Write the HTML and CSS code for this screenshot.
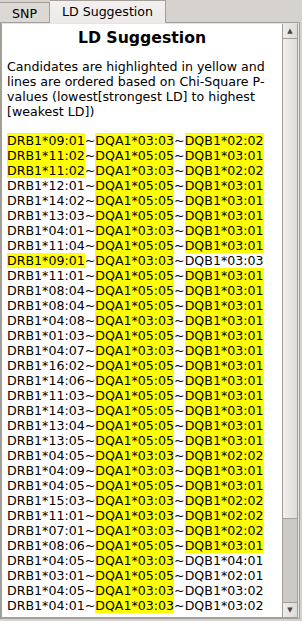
FILE: index.html
```html
<!DOCTYPE html>
<html lang="en">
<head>
  <meta charset="UTF-8" />
  <title>LD Suggestion</title>
  <link rel="stylesheet" href="styles.css">
</head>
<body>
  <div class="tabs">
    <div class="tab">SNP</div>
    <div class="tab active">LD Suggestion</div>
  </div>

  <div class="panel">
    <div class="frame">
      <div class="text">
        <div class="title">LD Suggestion</div>
        <p class="info">Candidates are highlighted in yellow and lines are ordered based on Chi-Square P-values (lowest[strongest LD] to highest [weakest LD])</p>

        <div class="list">
          <div><span class="hl">DRB1*09:01</span>~<span class="hl">DQA1*03:03</span>~<span class="hl">DQB1*02:02</span></div>
          <div><span class="hl">DRB1*11:02</span>~<span class="hl">DQA1*05:05</span>~<span class="hl">DQB1*03:01</span></div>
          <div><span class="hl">DRB1*11:02</span>~<span class="hl">DQA1*03:03</span>~<span class="hl">DQB1*02:02</span></div>
          <div>DRB1*12:01~<span class="hl">DQA1*05:05</span>~<span class="hl">DQB1*03:01</span></div>
          <div>DRB1*14:02~<span class="hl">DQA1*05:05</span>~<span class="hl">DQB1*03:01</span></div>
          <div>DRB1*13:03~<span class="hl">DQA1*05:05</span>~<span class="hl">DQB1*03:01</span></div>
          <div>DRB1*04:01~<span class="hl">DQA1*03:03</span>~<span class="hl">DQB1*03:01</span></div>
          <div>DRB1*11:04~<span class="hl">DQA1*05:05</span>~<span class="hl">DQB1*03:01</span></div>
          <div><span class="hl">DRB1*09:01</span>~<span class="hl">DQA1*03:03</span>~DQB1*03:03</div>
          <div>DRB1*11:01~<span class="hl">DQA1*05:05</span>~<span class="hl">DQB1*03:01</span></div>
          <div>DRB1*08:04~<span class="hl">DQA1*05:05</span>~<span class="hl">DQB1*03:01</span></div>
          <div>DRB1*08:04~<span class="hl">DQA1*05:05</span>~<span class="hl">DQB1*03:01</span></div>
          <div>DRB1*04:08~<span class="hl">DQA1*03:03</span>~<span class="hl">DQB1*03:01</span></div>
          <div>DRB1*01:03~<span class="hl">DQA1*05:05</span>~<span class="hl">DQB1*03:01</span></div>
          <div>DRB1*04:07~<span class="hl">DQA1*03:03</span>~<span class="hl">DQB1*03:01</span></div>
          <div>DRB1*16:02~<span class="hl">DQA1*05:05</span>~<span class="hl">DQB1*03:01</span></div>
          <div>DRB1*14:06~<span class="hl">DQA1*05:05</span>~<span class="hl">DQB1*03:01</span></div>
          <div>DRB1*11:03~<span class="hl">DQA1*05:05</span>~<span class="hl">DQB1*03:01</span></div>
          <div>DRB1*14:03~<span class="hl">DQA1*05:05</span>~<span class="hl">DQB1*03:01</span></div>
          <div>DRB1*13:04~<span class="hl">DQA1*05:05</span>~<span class="hl">DQB1*03:01</span></div>
          <div>DRB1*13:05~<span class="hl">DQA1*05:05</span>~<span class="hl">DQB1*03:01</span></div>
          <div>DRB1*04:05~<span class="hl">DQA1*03:03</span>~<span class="hl">DQB1*02:02</span></div>
          <div>DRB1*04:09~<span class="hl">DQA1*03:03</span>~<span class="hl">DQB1*03:01</span></div>
          <div>DRB1*04:05~<span class="hl">DQA1*05:05</span>~<span class="hl">DQB1*03:01</span></div>
          <div>DRB1*15:03~<span class="hl">DQA1*03:03</span>~<span class="hl">DQB1*02:02</span></div>
          <div>DRB1*11:01~<span class="hl">DQA1*03:03</span>~<span class="hl">DQB1*02:02</span></div>
          <div>DRB1*07:01~<span class="hl">DQA1*03:03</span>~<span class="hl">DQB1*02:02</span></div>
          <div>DRB1*08:06~<span class="hl">DQA1*05:05</span>~<span class="hl">DQB1*03:01</span></div>
          <div>DRB1*04:05~<span class="hl">DQA1*03:03</span>~DQB1*04:01</div>
          <div>DRB1*03:01~<span class="hl">DQA1*05:05</span>~DQB1*02:01</div>
          <div>DRB1*04:05~<span class="hl">DQA1*03:03</span>~DQB1*03:02</div>
          <div>DRB1*04:01~<span class="hl">DQA1*03:03</span>~DQB1*03:02</div>
        </div>
      </div>

      <div class="scrollbar">
        <div class="sb-btn">&#9650;</div>
        <div class="sb-thumb"></div>
        <div class="sb-track"></div>
        <div class="sb-btn">&#9660;</div>
      </div>
    </div>
  </div>
</body>
</html>
```

FILE: styles.css
```css
body {
  margin: 0;
  background-color: #d6d3ce;
  font-family: "DejaVu Sans", sans-serif;
  font-size: 12.6px;
  color: #000;
  width: 302px;
  height: 621px;
  overflow: hidden;
}

.tabs {
  display: flex;
  align-items: flex-end;
  height: 22px;
}

.tab {
  box-sizing: border-box;
  width: 50px;
  height: 20px;
  background: #dcd9d4;
  border: 1px solid #a29e98;
  border-bottom: none;
  border-left: none;
  display: flex;
  justify-content: center;
  align-items: center;
  padding-top: 1px;
}

.tab.active {
  width: 116px;
  height: 23px;
  margin-bottom: -1px;
  background: linear-gradient(#f2f1ef, #ebeae8);
  padding-bottom: 2px;
  position: relative;
}

.panel {
  box-sizing: border-box;
  width: 300px;
  height: 597px;
  border: 1px solid #a29e98;
  background: #e6e4e0;
}

.frame {
  box-sizing: border-box;
  height: 100%;
  display: flex;
  border: 1px solid #a29e98;
  border-top-color: #e6e4e0;
  margin-right: 1px;
}

.text {
  flex: 1;
  background: #fff;
  overflow: hidden;
  padding: 4px 5px 0 5px;
  line-height: 15px;
}

.title {
  font-weight: bold;
  font-size: 15.7px;
  line-height: 20px;
  text-align: center;
  margin-bottom: 11px;
}

.info {
  margin: 0 0 14px 0;
}

.list {
  white-space: nowrap;
}

.hl {
  background: #ffff00;
}

.scrollbar {
  width: 14px;
  border-left: 1px solid #a29e98;
  display: flex;
  flex-direction: column;
}

.sb-btn {
  height: 14px;
  border-bottom: 1px solid #a29e98;
  background: linear-gradient(90deg, #eeedeb, #dddbd7);
  font-size: 7px;
  line-height: 14px;
  text-align: center;
  color: #444;
}

.sb-btn:last-child {
  border-bottom: none;
  border-top: 1px solid #a29e98;
}

.sb-thumb {
  height: 479px;
  background: linear-gradient(90deg, #f1f0ee, #dedcd8);
  border-bottom: 1px solid #a29e98;
}

.sb-track {
  flex: 1;
  background: #cdcac5;
}
```
